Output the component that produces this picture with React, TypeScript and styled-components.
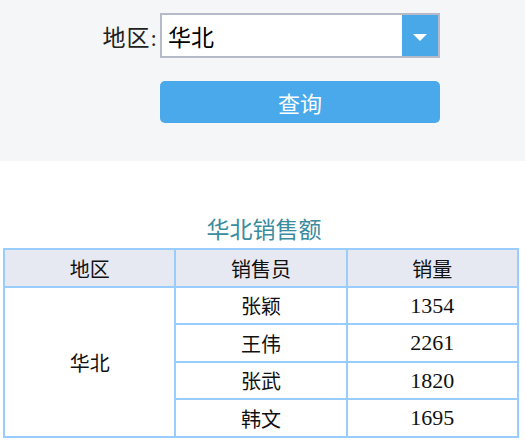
import React from "react";
import styled, { createGlobalStyle } from "styled-components";

const GlobalStyle = createGlobalStyle`
  body {
    margin: 0;
    background: #ffffff;
    font-family: "Liberation Serif", "Noto Sans CJK SC", serif;
  }
`;

const QueryPanel = styled.div`
  background: #f5f6f8;
  height: 161px;
  box-sizing: border-box;
  padding-top: 13px;
  display: flex;
  flex-direction: column;
  gap: 23px;
`;

const FieldRow = styled.div`
  display: flex;
  align-items: center;
`;

const Label = styled.label`
  width: 160px;
  text-align: right;
  padding-right: 2px;
  box-sizing: border-box;
  font-size: 23px;
  letter-spacing: 1px;
  color: #222;
  font-family: "Liberation Serif", "Noto Sans CJK SC", serif;
`;

const SelectBox = styled.div`
  width: 280px;
  height: 45px;
  box-sizing: border-box;
  border: 2px solid #b6b9c8;
  background: #fff;
  display: flex;
`;

const SelectValue = styled.div`
  flex: 1;
  display: flex;
  align-items: center;
  padding-left: 6px;
  font-size: 23px;
  color: #000;
  font-family: "Noto Sans CJK SC", sans-serif;
`;

const DropButton = styled.div`
  width: 36px;
  background: #48a8e8;
  display: flex;
  align-items: center;
  justify-content: center;
  padding-top: 3px;
`;

const SearchButton = styled.button`
  margin-left: 160px;
  width: 280px;
  height: 42px;
  border: none;
  border-radius: 5px;
  background: #4aa9ea;
  color: #fff;
  font-size: 22px;
  font-family: "Noto Sans CJK SC", sans-serif;
  padding: 0;
`;

const ReportSection = styled.div`
  padding: 51px 6px 0 3px;
`;

const Title = styled.div`
  text-align: center;
  font-size: 23px;
  color: #3a8c9e;
  line-height: 32px;
  margin-bottom: 4px;
  font-family: "Noto Sans CJK SC", sans-serif;
  padding-left: 6px;
`;

const Table = styled.table`
  width: 516px;
  border-collapse: collapse;
  border: 2px solid #99ccff;
  table-layout: fixed;
`;

const HeadCell = styled.th`
  height: 36px;
  padding: 0;
  border: 2px solid #99ccff;
  background: #e6e9f1;
  font-weight: normal;
  font-size: 20px;
  color: #111;
`;

const Cell = styled.td<{ tall?: boolean; numeric?: boolean }>`
  height: ${(p) => (p.tall ? 36 : 35)}px;
  padding: 0;
  border: 2px solid #99ccff;
  text-align: center;
  font-size: ${(p) => (p.numeric ? 22 : 20)}px;
  color: #111;
`;

const rows = [
  { name: "张颖", amount: 1354 },
  { name: "王伟", amount: 2261 },
  { name: "张武", amount: 1820 },
  { name: "韩文", amount: 1695 },
];

const App = () => {
  return (
    <>
      <GlobalStyle />
      <QueryPanel>
        <FieldRow>
          <Label>地区:</Label>
          <SelectBox>
            <SelectValue>华北</SelectValue>
            <DropButton>
              <svg width="16" height="9" viewBox="0 0 16 9">
                <path d="M1 1 L15 1 L8 8 Z" fill="#fff" />
              </svg>
            </DropButton>
          </SelectBox>
        </FieldRow>
        <SearchButton>查询</SearchButton>
      </QueryPanel>
      <ReportSection>
        <Title>华北销售额</Title>
        <Table>
          <thead>
            <tr>
              <HeadCell>地区</HeadCell>
              <HeadCell>销售员</HeadCell>
              <HeadCell>销量</HeadCell>
            </tr>
          </thead>
          <tbody>
            {rows.map((r, i) => (
              <tr key={r.name}>
                {i === 0 && <Cell rowSpan={rows.length}>华北</Cell>}
                <Cell tall={i === 1 || i === 3}>{r.name}</Cell>
                <Cell tall={i === 1 || i === 3} numeric>
                  {r.amount}
                </Cell>
              </tr>
            ))}
          </tbody>
        </Table>
      </ReportSection>
    </>
  );
};

export default App;
